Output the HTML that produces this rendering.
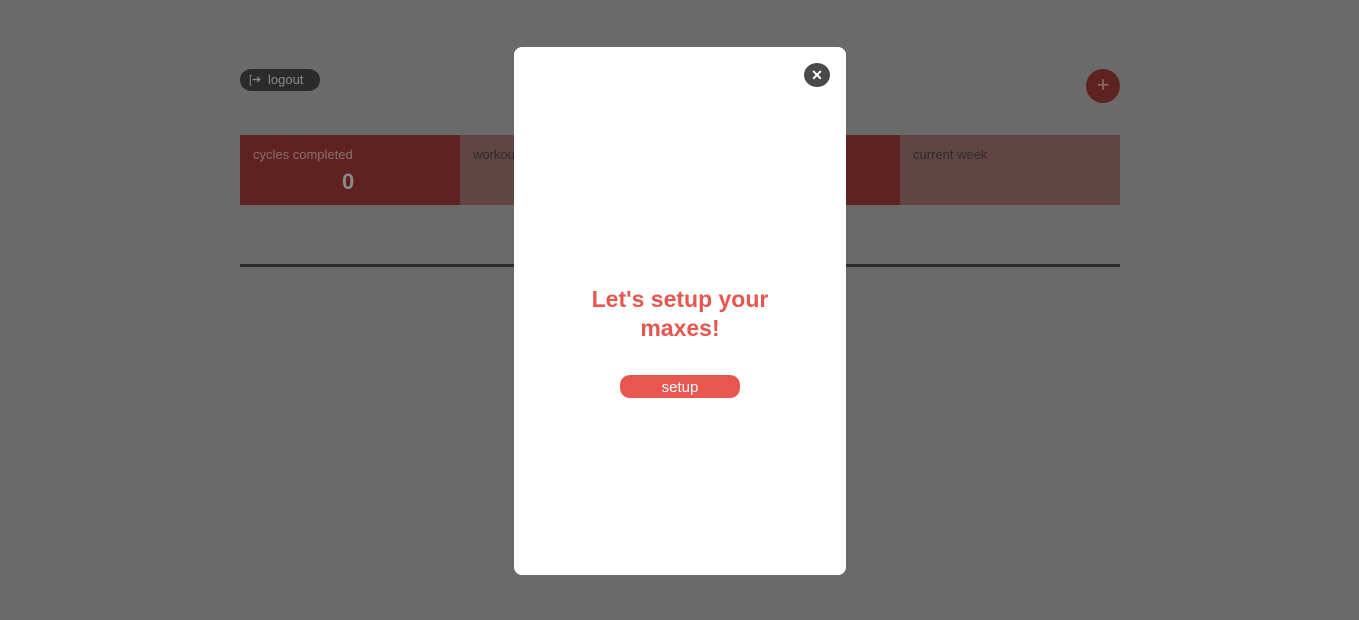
<!DOCTYPE html>
<html><head><style>
body{margin:0;width:1359px;height:620px;background:#6a6a6a;font-family:"Liberation Sans",sans-serif;position:relative;overflow:hidden}
.a{position:absolute}
</style></head><body>
<div class="a" style="left:240px;top:69px;width:80px;height:22px;background:#2b2b2b;border-radius:11px;color:#8a8a8a;font-size:13px;line-height:22px">
<span style="position:absolute;left:9px;top:0;font-size:11px">[➔</span><span style="position:absolute;left:28px">logout</span></div>
<div class="a" style="left:1086px;top:69px;width:34px;height:34px;border-radius:50%;background:#5e2220;color:#8a6a6a;font-size:22px;line-height:32px;text-align:center">+</div>
<div class="a" style="left:240px;top:135px;width:220px;height:70px;background:#5e2220"></div>
<div class="a" style="left:460px;top:135px;width:220px;height:70px;background:#614545"></div>
<div class="a" style="left:680px;top:135px;width:220px;height:70px;background:#5e2220"></div>
<div class="a" style="left:900px;top:135px;width:220px;height:70px;background:#614545"></div>
<div class="a" style="left:253px;top:147px;font-size:13px;color:#8a7070">cycles completed</div>
<div class="a" style="left:342px;top:169px;font-size:22px;font-weight:bold;color:#8a8a8a">0</div>
<div class="a" style="left:473px;top:147px;font-size:13px;color:#2e2a2a">workouts</div>
<div class="a" style="left:913px;top:147px;font-size:13px;color:#2e2a2a">current week</div>
<div class="a" style="left:240px;top:264px;width:880px;height:3px;background:#2b2b2b"></div>
<div class="a" style="left:514px;top:47px;width:332px;height:528px;background:#fff;border-radius:8px">
<div class="a" style="left:290px;top:16px;width:26px;height:24px;border-radius:50%;background:#4a4a4a;color:#fff;font-size:14px;font-weight:bold;line-height:24px;text-align:center">✕</div>
<div class="a" style="left:0;top:238px;width:332px;text-align:center;color:#e85650;font-size:23px;font-weight:bold;line-height:29px">Let's setup your<br>maxes!</div>
<div class="a" style="left:106px;top:328px;width:120px;height:23px;border-radius:10px;background:#e85650;color:#fff;font-size:15px;line-height:25px;text-align:center">setup</div>
</div>
</body></html>
